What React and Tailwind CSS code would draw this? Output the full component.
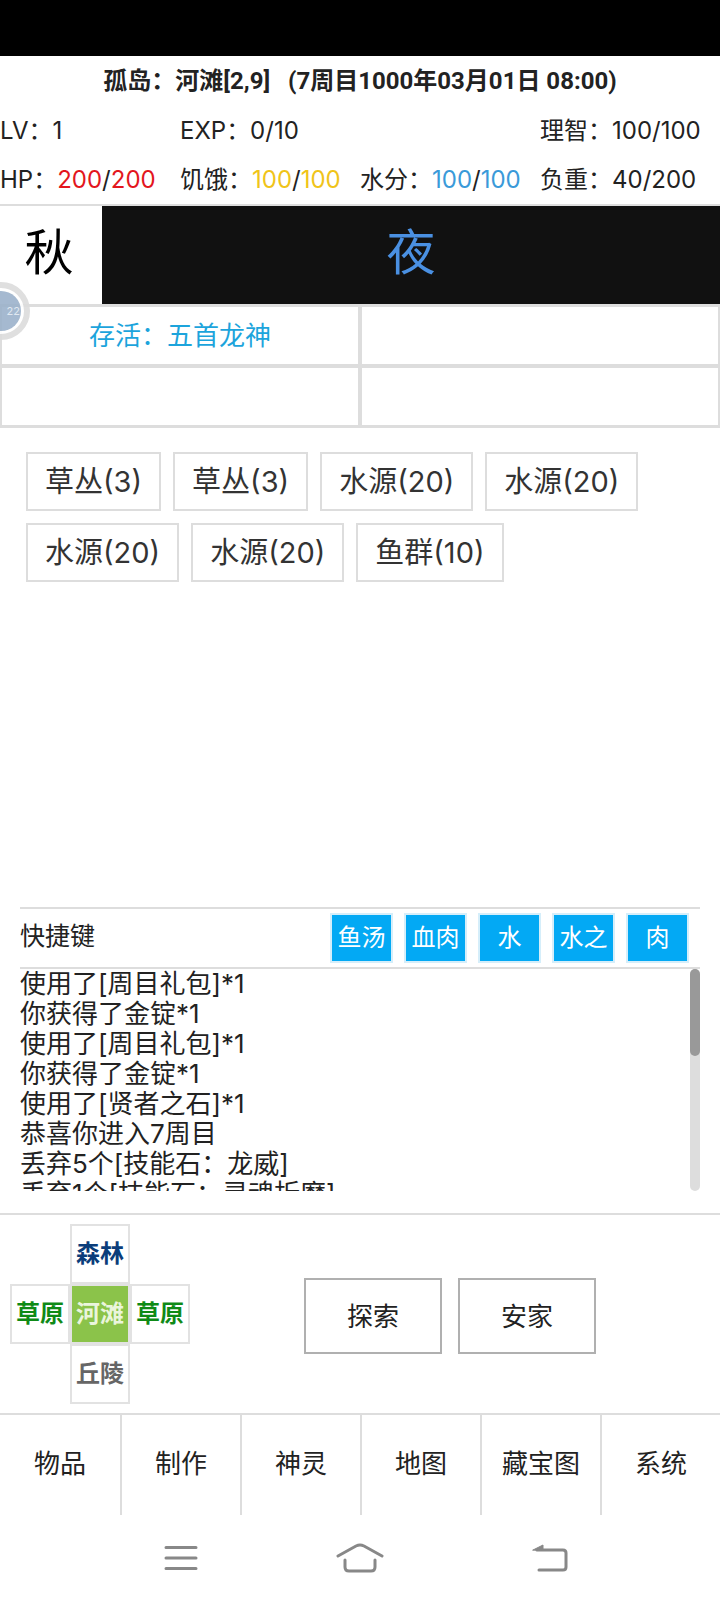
const font = { fontFamily: 'Inter, "Noto Sans CJK SC", sans-serif' };

const logs = [
  "使用了[周目礼包]*1",
  "你获得了金锭*1",
  "使用了[周目礼包]*1",
  "你获得了金锭*1",
  "使用了[贤者之石]*1",
  "恭喜你进入7周目",
  "丢弃5个[技能石：龙威]",
  "丢弃1个[技能石：灵魂折磨]",
];

function Tag({ children }) {
  return (
    <div className="h-[59px] px-[17px] flex items-center border-2 border-[#ddd] text-[29px] text-[#333]">
      {children}
    </div>
  );
}

function MapCell({ children, color, active }) {
  return (
    <div
      className={`w-[60px] h-[60px] flex items-center justify-center border-2 border-[#e2e2e2] text-[24px] font-bold ${color} ${active ? "bg-[#8bc34a]" : ""}`}
    >
      {children}
    </div>
  );
}

export default function App() {
  return (
    <div className="w-[720px] h-[1600px] bg-white text-[#222] flex flex-col overflow-hidden relative" style={font}>
      <div className="h-[56px] bg-black" />
      <div className="h-[50px] pb-[1px] flex items-center justify-center text-[24px] font-bold leading-none font-['Roboto','Noto_Sans_CJK_SC',sans-serif]">
        <span>孤岛：河滩[2,9]</span>
        <span className="ml-[18px]">(7周目1000年03月01日 08:00)</span>
      </div>
      <div className="grid grid-cols-4 h-[50px] pb-[1px] items-center text-[24px] leading-none">
        <div>LV：1</div>
        <div>EXP：0/10</div>
        <div />
        <div>理智：100/100</div>
      </div>
      <div className="grid grid-cols-4 h-[48px] items-center text-[24px] leading-none">
        <div>HP：<span className="text-[#e3161d]">200</span>/<span className="text-[#e3161d]">200</span></div>
        <div>饥饿：<span className="text-[#f0c419]">100</span>/<span className="text-[#f0c419]">100</span></div>
        <div>水分：<span className="text-[#3a9ad9]">100</span>/<span className="text-[#3a9ad9]">100</span></div>
        <div>负重：40/200</div>
      </div>
      <div className="h-[100px] flex border-t-2 border-[#ddd]">
        <div className="w-[102px] pb-[4px] pr-[4px] flex items-center justify-center text-[49px] text-black">秋</div>
        <div className="flex-1 pb-[4px] flex items-center justify-center bg-[#111] text-[49px] text-[#4a90e2]">夜</div>
      </div>
      <div className="grid grid-cols-2 grid-rows-2 h-[124px] bg-[#ddd] gap-[4px] py-[3px] px-[2px]">
        <div className="bg-white flex items-center justify-center text-[26px] text-[#1ca4dc]">存活：五首龙神</div>
        <div className="bg-white" />
        <div className="bg-white" />
        <div className="bg-white" />
      </div>
      <div className="h-[479px] px-[26px] pt-[24px] flex flex-wrap content-start gap-x-[12px] gap-y-[12px]">
        <Tag>草丛(3)</Tag>
        <Tag>草丛(3)</Tag>
        <Tag>水源(20)</Tag>
        <Tag>水源(20)</Tag>
        <Tag>水源(20)</Tag>
        <Tag>水源(20)</Tag>
        <Tag>鱼群(10)</Tag>
      </div>
      <div className="mx-[20px] h-[58px] border-y-2 border-[#ddd] flex items-center justify-between box-content">
        <div className="text-[25px] pb-[3px]">快捷键</div>
        <div className="flex gap-[11px] pr-[11px]">
          {["鱼汤", "血肉", "水", "水之", "肉"].map((s) => (
            <div
              key={s}
              className="w-[63px] h-[50px] flex items-center justify-center bg-[#03a9f4] border-2 border-[#d5eefa] text-white text-[24px]"
            >
              {s}
            </div>
          ))}
        </div>
      </div>
      <div className="mx-[20px] h-[222px] flex justify-between">
        <div className="overflow-hidden text-[26px] leading-[30px]">
          {logs.map((l, i) => (
            <div key={i}>{l}</div>
          ))}
        </div>
        <div className="w-[10px] h-full bg-[#ddd] rounded-full">
          <div className="h-[87px] bg-[#999] rounded-full" />
        </div>
      </div>
      <div className="mt-[22px] h-[198px] border-y-2 border-[#ddd] flex items-center box-content">
        <div className="ml-[10px] w-[180px] grid grid-cols-3">
          <div />
          <MapCell color="text-[#0b3d7a]">森林</MapCell>
          <div />
          <MapCell color="text-[#0f8a16]">草原</MapCell>
          <MapCell color="text-[#eaf5dc]" active>河滩</MapCell>
          <MapCell color="text-[#0f8a16]">草原</MapCell>
          <div />
          <MapCell color="text-[#666]">丘陵</MapCell>
          <div />
        </div>
        <div className="ml-[114px] mt-[4px] flex gap-[16px]">
          <div className="w-[138px] h-[76px] flex items-center justify-center border-2 border-[#b0b0b0] text-[26px]">探索</div>
          <div className="w-[138px] h-[76px] flex items-center justify-center border-2 border-[#b0b0b0] text-[26px]">安家</div>
        </div>
      </div>
      <div className="grid grid-cols-6 h-[100px]">
        {["物品", "制作", "神灵", "地图", "藏宝图", "系统"].map((s, i) => (
          <div
            key={s}
            className={`pb-[3px] flex items-center justify-center text-[26px] ${i > 0 ? "border-l-2 border-[#ddd]" : ""}`}
          >
            {s}
          </div>
        ))}
      </div>
      <div className="flex-1 pl-[164px] flex items-center">
        <svg width="34" height="26" viewBox="0 0 34 26" fill="none" stroke="#888" strokeWidth="3" strokeLinecap="round">
          <path d="M2 2.5H32M2 13H32M2 23.5H32" />
        </svg>
        <svg className="ml-[138px]" width="48" height="30" viewBox="0 0 48 30" fill="none" stroke="#888" strokeWidth="3" strokeLinecap="round" strokeLinejoin="round">
          <path d="M2 13 20 3Q24 1 28 3L46 13" />
          <path d="M9 17V24Q9 28 13 28H35Q39 28 39 24V17" />
        </svg>
        <svg className="ml-[148px]" width="36" height="28" viewBox="0 0 36 28" fill="none" stroke="#888" strokeWidth="3" strokeLinecap="round" strokeLinejoin="round">
          <path d="M5 6H31Q34 6 34 9V23Q34 26 31 26H7" />
          <path d="M1 6 11 1V6Z" fill="#888" strokeWidth="1" />
        </svg>
      </div>
      <div className="absolute left-[-28px] top-[282px] w-[58px] h-[58px] rounded-full border-[6px] border-[#dcdcdc] bg-white p-[3px] opacity-90">
        <div className="w-full h-full rounded-full bg-[#9cb2cb] flex items-center justify-end pr-[1px] text-[11px] text-[#dde6f0] leading-none">22</div>
      </div>
    </div>
  );
}
